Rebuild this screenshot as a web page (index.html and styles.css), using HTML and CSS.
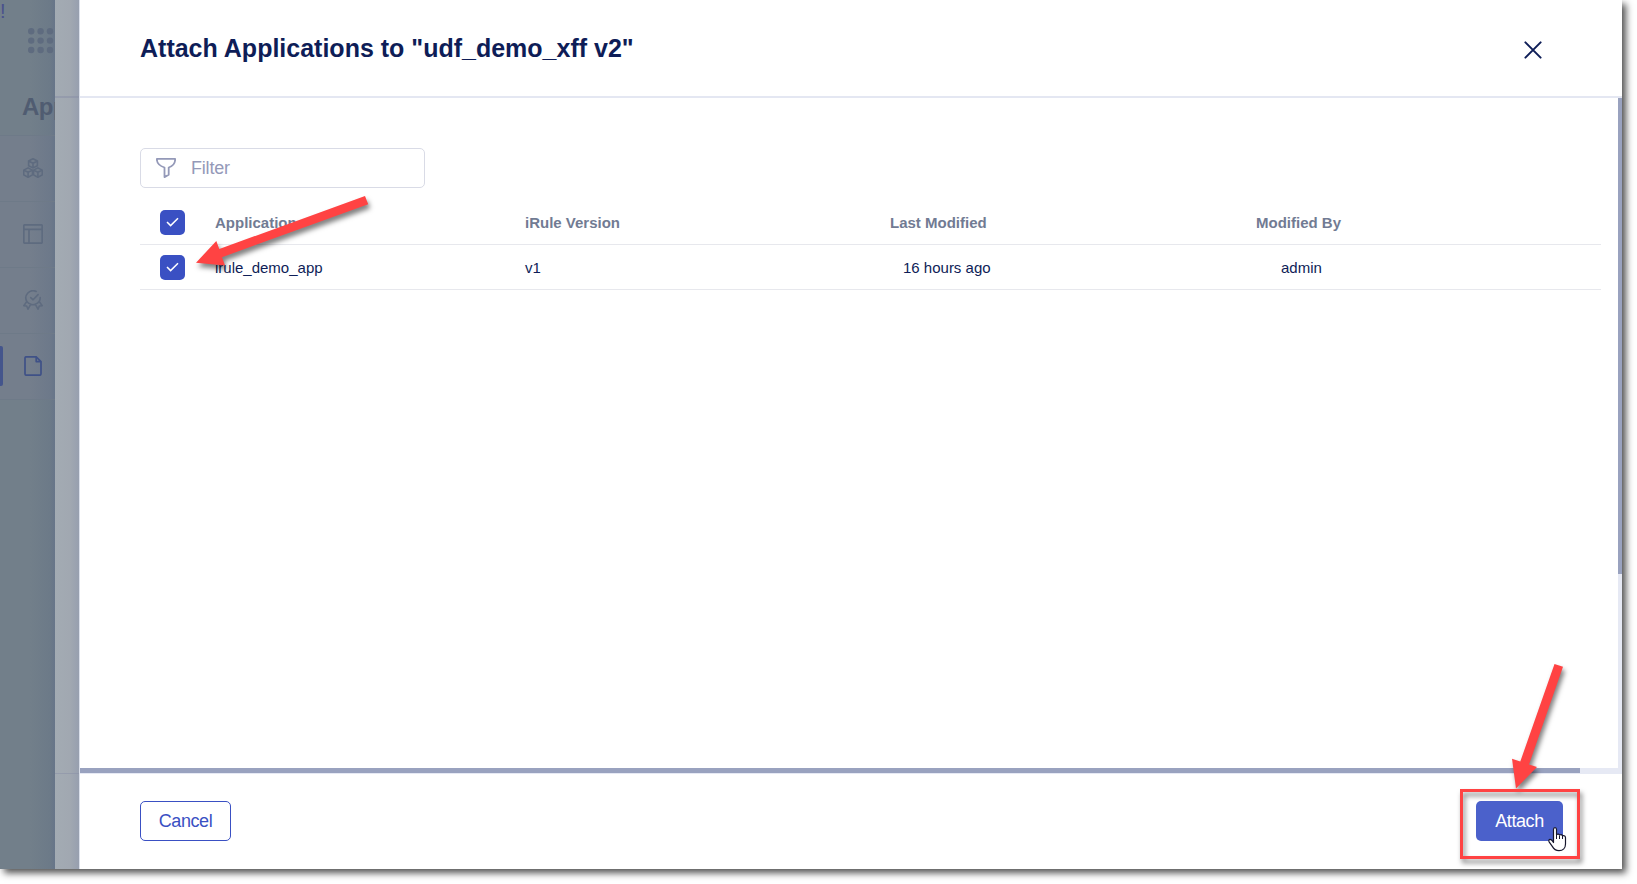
FILE: index.html
```
<!DOCTYPE html>
<html lang="en">
<head>
<meta charset="utf-8">
<title>Attach Applications</title>
<link rel="stylesheet" href="styles.css">
</head>
<body>
<div class="window">
  <aside class="sidebar">
    <div class="sidebar-top">
      <span class="bang">!</span>
      <svg class="waffle" width="26" height="26" viewBox="0 0 26 26"><g fill="currentColor"><circle cx="3.2" cy="3.2" r="3.2"/><circle cx="12.6" cy="3.2" r="3.2"/><circle cx="22" cy="3.2" r="3.2"/><circle cx="3.2" cy="12.6" r="3.2"/><circle cx="12.6" cy="12.6" r="3.2"/><circle cx="22" cy="12.6" r="3.2"/><circle cx="3.2" cy="22" r="3.2"/><circle cx="12.6" cy="22" r="3.2"/><circle cx="22" cy="22" r="3.2"/></g></svg>
      <div class="app-name">App</div>
    </div>
    <nav class="nav">
      <div class="nav-item">
        <svg width="20" height="20" viewBox="0 0 20 20" fill="none" stroke="currentColor" stroke-width="1.600" stroke-linejoin="round"><path d="M10 .8l4.400 2.200v4.700L10 9.900 5.600 7.700V3zM5.600 3L10 5.200l4.400-2.200M10 5.200v4.700M5.100 9.900l4.400 2.200v4.800l-4.400 2.300-4.400-2.300v-4.800zM.7 12.100l4.400 2.200 4.400-2.200M5.100 14.300v4.900M14.900 9.900l4.400 2.200v4.800l-4.400 2.300-4.400-2.300v-4.800zM10.500 12.100l4.400 2.200 4.400-2.200M14.900 14.300v4.900"/></svg>
      </div>
      <div class="nav-item">
        <svg width="20" height="20" viewBox="0 0 20 20" fill="none" stroke="currentColor" stroke-width="1.700"><rect x=".8" y=".8" width="18.400" height="18.400" rx="1"/><path d="M1 5.300h18M6 5.300v14"/></svg>
      </div>
      <div class="nav-item">
        <svg width="20" height="20" viewBox="0 0 20 20" fill="none" stroke="currentColor" stroke-width="1.600" stroke-linecap="round" stroke-linejoin="round"><path d="M13.200 1.500A7.200 7.200 0 0 0 3.800 11.500M17.200 7.500a7.200 7.200 0 0 1-1 4M7.600 14.300q2.400.9 4.800 0M7.700 7.700l2.400 2.100 5-5.200M3.800 11.500L.8 15.700l2.900.3 1.300 3.200 2.800-5q-2.600-.8-4-2.700zM16.200 11.500l3 4.200-2.900.3-1.300 3.200-2.800-5q2.600-.8 4-2.700z"/></svg>
      </div>
      <div class="nav-item active">
        <svg width="20" height="20" viewBox="0 0 20 20" fill="none" stroke="currentColor" stroke-width="1.700" stroke-linejoin="round"><path d="M13.200.8H3.300Q2 .8 2 2.200v15.600q0 1.400 1.300 1.400h13.400q1.300 0 1.300-1.400V5.600zM13.200.8v4.800H18"/></svg>
      </div>
    </nav>
  </aside>
  <div class="under-panel"><div class="under-head"></div><div class="under-body"></div></div>
  <main class="modal">
    <header class="modal-head">
      <h1>Attach Applications to "udf_demo_xff v2"</h1>
      <svg class="close" width="18" height="18" viewBox="0 0 18 18" stroke="#0e1d57" stroke-width="2" stroke-linecap="round"><path d="M1.400 1.400l15.200 15.200M16.600 1.400L1.400 16.600"/></svg>
    </header>
    <section class="scroller">
      <div class="scroll-row">
        <div class="content">
          <div class="filter">
            <svg width="20" height="20" viewBox="0 0 20 20" fill="none" stroke="#9499b8" stroke-width="1.800" stroke-linejoin="round"><path d="M.8.9h18.400c0 4.300-2.600 7.300-6.500 8.600v7.300l-4.200 2.300V9.500C4 8 .8 5 .8.9z"/></svg>
            <span>Filter</span>
          </div>
          <div class="table">
            <div class="row head">
              <div class="check"><svg width="13" height="10" viewBox="0 0 13 10" fill="none" stroke="#fff" stroke-width="1.500"><path d="M1 5l3.600 3.600L12 1.200"/></svg></div>
              <div>Application</div><div>iRule Version</div><div>Last Modified</div><div>Modified By</div>
            </div>
            <div class="row">
              <div class="check"><svg width="13" height="10" viewBox="0 0 13 10" fill="none" stroke="#fff" stroke-width="1.500"><path d="M1 5l3.600 3.600L12 1.200"/></svg></div>
              <div>irule_demo_app</div><div>v1</div><div class="time">16 hours ago</div><div class="user">admin</div>
            </div>
          </div>
        </div>
        <div class="vbar"><div class="vthumb"></div></div>
      </div>
      <div class="hbar"><div class="hthumb"></div></div>
    </section>
    <footer class="modal-foot">
      <div class="btn cancel"><span>Cancel</span></div>
      <div class="btn attach"><span>Attach</span></div>
    </footer>
  </main>
</div>
<svg class="annotations" width="1637" height="884" viewBox="0 0 1637 884">
  <g class="callout">
    <path fill="#ff4343" d="M196 262.700L216.300 241l3 8L365 196l3.200 8.300L222 257.200l3 8.200z"/>
    <path fill="#ff4343" d="M1516 788.500L1512 758.700l8.300 2.700L1554.500 664l8.500 2.700-34 97.700 8 2.600z"/>
    <rect x="1461.500" y="790.500" width="117" height="67" fill="none" stroke="#ff4343" stroke-width="3"/>
  </g>
  <path fill="#fff" stroke="#15152b" stroke-width="1.200" stroke-linejoin="round" d="M1553.500 841v-11.500q0-1.900 1.500-1.900t1.500 1.900v5q2.500-1 3 .5 2.400-.8 3 .7 3-.6 3 2v6.300c0 3.800-2.500 6.600-6.500 6.600-3.500 0-5.200-1.500-6.700-4.200l-3.200-4.600q-.8-2 .8-2.400 1.700-.2 3.600 3.100z"/>
  <path fill="none" stroke="#15152b" stroke-width="1" d="M1556.500 834.500v4.500M1559.500 835.500v3.500M1562.500 836v3"/>
</svg>
</body>
</html>
```
FILE: styles.css
```
* { box-sizing: border-box; }

body {
  margin: 0;
  height: 884px;
  overflow: hidden;
  background: #fff;
  font-family: "Liberation Sans", Arial, sans-serif;
  color: #0e1d57;
}

.window {
  display: flex;
  width: 1622px;
  height: 869px;
  box-shadow: 4px 4px 7px rgba(0, 0, 0, .68);
}

.sidebar {
  width: 55px;
  overflow: hidden;
  color: #5e6b7f;
  background: linear-gradient(90deg, #727f8a 30px, #6c7a88 50px, #677589 55px);
}

.sidebar-top {
  position: relative;
  height: 136px;
  padding: 28px 0 0 28px;
  border-bottom: 1px solid #6e7a88;
}

.bang {
  position: absolute;
  left: 0;
  top: 0;
  font-size: 20px;
  line-height: 22px;
  color: #49518d;
}

.waffle { display: block; }

.app-name {
  margin: 38px 0 0 -6px;
  font-size: 24px;
  line-height: 30px;
  font-weight: bold;
  letter-spacing: -.5px;
  color: #505c71;
}

.nav-item {
  display: flex;
  align-items: center;
  height: 66px;
  padding: 0 0 1px 23px;
  border-bottom: 1px solid #6e7a88;
  background: linear-gradient(90deg, #747e8c 30px, #6d798a 50px, #677589 55px);
}

.nav-item.active { padding-left: 0; color: #3f5187; }
.nav-item.active::before {
  content: "";
  width: 3px;
  height: 40px;
  margin-right: 20px;
  border-radius: 0 2px 2px 0;
  background: #44558c;
}

.under-panel {
  display: flex;
  flex-direction: column;
  width: 25px;
  border-right: 1px solid #dadfea;
  background: linear-gradient(90deg, #a3abb3 0, #a1a8b1 15px, #979faf 24px);
}

.under-head { height: 98px; border-bottom: 2px solid rgba(135, 142, 165, .5); }
.under-body { height: 676px; border-bottom: 1px solid rgba(135, 142, 165, .5); }

.modal {
  display: flex;
  flex-direction: column;
  width: 1542px;
  background: #fff;
}

.modal-head {
  display: flex;
  justify-content: space-between;
  align-items: flex-start;
  height: 98px;
  padding: 34px 80px 0 60px;
  border-bottom: 2px solid #e4e7f2;
}

.modal-head h1 {
  margin: 0;
  font-size: 25px;
  line-height: 29px;
}

.close { margin-top: 7px; }

.scroller { height: 676px; }
.scroll-row { display: flex; height: 670px; }
.content { flex: 1; padding: 50px 17px 0 60px; }

.vbar { width: 4px; background: #e6e9f4; }
.vthumb { height: 476px; background: #99a2bf; }
.hbar { height: 6px; background: #e6e9f4; }
.hthumb { width: 1500px; height: 5px; background: #99a2bf; }

.filter {
  display: flex;
  align-items: center;
  gap: 15px;
  width: 285px;
  height: 40px;
  padding-left: 15px;
  border: 1px solid #d9dbe6;
  border-radius: 5px;
  color: #9499b8;
  font-size: 18px;
  letter-spacing: -.2px;
}

.table { margin-top: 12px; font-size: 15px; }

.row {
  display: grid;
  grid-template-columns: 55px 310px 365px 366px 1fr;
  align-items: center;
  height: 45px;
  padding-left: 20px;
  border-bottom: 1px solid #e7e8ed;
}

.row.head { font-weight: bold; color: #717b93; }
.time { padding-left: 13px; }
.user { padding-left: 25px; }

.check {
  display: flex;
  align-items: center;
  justify-content: center;
  width: 25px;
  height: 25px;
  border-radius: 5px;
  background: #3a50c3;
}

.modal-foot {
  display: flex;
  justify-content: space-between;
  height: 95px;
  padding: 27px 59px 0 60px;
}

.btn {
  display: flex;
  align-items: center;
  justify-content: center;
  height: 40px;
  border-radius: 5px;
  font-size: 18px;
  letter-spacing: -.4px;
}

.cancel { width: 91px; border: 1px solid #3a50c3; color: #3a50c3; }
.attach { width: 87px; background: #4b61cb; color: #fff; }

.annotations { position: absolute; left: 0; top: 0; }
.callout { filter: drop-shadow(2px 4px 2.5px rgba(0, 0, 0, .5)); }
```
